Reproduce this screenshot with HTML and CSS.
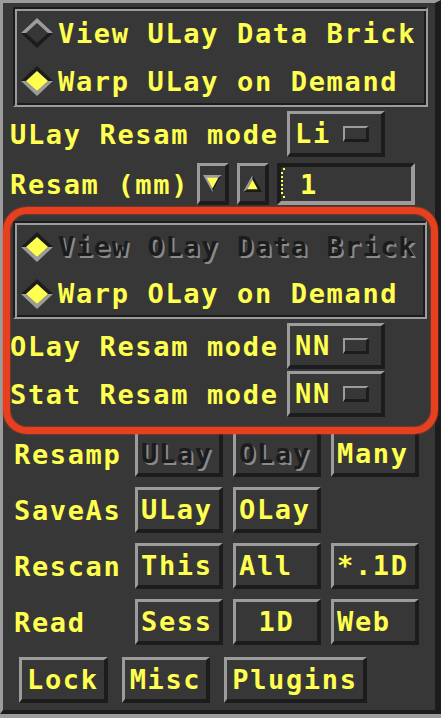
FILE: index.html
```html
<!DOCTYPE html>
<html lang="en">
<head>
  <meta charset="UTF-8">
  <title>Datamode panel</title>
  <link rel="stylesheet" href="styles.css">
</head>
<body>
  <div class="panel">
    <div class="radiobox">
      <div class="radio">
        <svg class="diamond" width="32" height="30" viewBox="0 0 32 30">
          <polygon points="0,15 16,0 32,15 27,15 16,5 5,15" fill="#9c9c9c"/>
          <polygon points="0,15 16,30 32,15 27,15 16,25 5,15" fill="#1c1c1c"/>
        </svg>
        <span>View ULay Data Brick</span>
      </div>
      <div class="radio">
        <svg class="diamond" width="32" height="30" viewBox="0 0 32 30">
          <polygon points="0,15 16,0 32,15 27,15 16,5 5,15" fill="#1c1c1c"/>
          <polygon points="0,15 16,30 32,15 27,15 16,25 5,15" fill="#9c9c9c"/>
          <polygon points="5,15 16,5 27,15 16,25" fill="#ffff50"/>
        </svg>
        <span>Warp ULay on Demand</span>
      </div>
    </div>

    <div class="row opt">
      <span class="label wide">ULay Resam mode</span>
      <div class="optbtn bevel"><span class="optval">Li</span><span class="indicator"></span></div>
    </div>

    <div class="row resam">
      <span class="label short">Resam (mm)</span>
      <div class="arrow bevel">
        <svg width="19" height="19" viewBox="0 0 20 20">
          <polygon points="0,1 20,1 10,19" fill="#9c9c9c"/>
          <polygon points="20,1 10,19 10,15 16,4" fill="#1c1c1c"/>
          <polygon points="4,4 16,4 10,15" fill="#ffff50"/>
        </svg>
      </div>
      <div class="arrow bevel up">
        <svg width="19" height="19" viewBox="0 0 20 20">
          <polygon points="10,1 20,19 0,19" fill="#1c1c1c"/>
          <polygon points="10,1 0,19 4.5,16 10,6" fill="#9c9c9c"/>
          <polygon points="10,6 15.5,16 4.5,16" fill="#ffff50"/>
        </svg>
      </div>
      <div class="field sunken">
        <svg class="cursor" width="6" height="32" viewBox="0 0 6 32">
          <rect x="2" y="0" width="2" height="2" fill="#ffff50"/>
          <rect x="0" y="4" width="2" height="2" fill="#ffff50"/>
          <rect x="0" y="8" width="2" height="2" fill="#ffff50"/>
          <rect x="0" y="12" width="2" height="2" fill="#ffff50"/>
          <rect x="0" y="16" width="2" height="2" fill="#ffff50"/>
          <rect x="0" y="20" width="2" height="2" fill="#ffff50"/>
          <rect x="0" y="24" width="2" height="2" fill="#ffff50"/>
          <rect x="2" y="28" width="2" height="2" fill="#ffff50"/>
        </svg>
        <span class="fieldval">1</span>
      </div>
    </div>

    <div class="radiobox second">
      <div class="radio">
        <svg class="diamond" width="32" height="30" viewBox="0 0 32 30">
          <polygon points="0,15 16,0 32,15 27,15 16,5 5,15" fill="#1c1c1c"/>
          <polygon points="0,15 16,30 32,15 27,15 16,25 5,15" fill="#9c9c9c"/>
          <polygon points="5,15 16,5 27,15 16,25" fill="#ffff50"/>
        </svg>
        <span class="dis">View OLay Data Brick</span>
      </div>
      <div class="radio">
        <svg class="diamond" width="32" height="30" viewBox="0 0 32 30">
          <polygon points="0,15 16,0 32,15 27,15 16,5 5,15" fill="#1c1c1c"/>
          <polygon points="0,15 16,30 32,15 27,15 16,25 5,15" fill="#9c9c9c"/>
          <polygon points="5,15 16,5 27,15 16,25" fill="#ffff50"/>
        </svg>
        <span>Warp OLay on Demand</span>
      </div>
    </div>

    <div class="row opt">
      <span class="label wide">OLay Resam mode</span>
      <div class="optbtn bevel"><span class="optval">NN</span><span class="indicator"></span></div>
    </div>
    <div class="row opt tight">
      <span class="label wide">Stat Resam mode</span>
      <div class="optbtn bevel"><span class="optval">NN</span><span class="indicator"></span></div>
    </div>

    <div class="row btnrow first">
      <span class="label side">Resamp</span>
      <div class="btn bevel"><span class="dis">ULay</span></div>
      <div class="btn bevel"><span class="dis">OLay</span></div>
      <div class="btn bevel">Many</div>
    </div>
    <div class="row btnrow">
      <span class="label side">SaveAs</span>
      <div class="btn bevel">ULay</div>
      <div class="btn bevel">OLay</div>
    </div>
    <div class="row btnrow">
      <span class="label side">Rescan</span>
      <div class="btn bevel">This</div>
      <div class="btn bevel">All</div>
      <div class="btn bevel">*.1D</div>
    </div>
    <div class="row btnrow">
      <span class="label side">Read</span>
      <div class="btn bevel">Sess</div>
      <div class="btn bevel center">1D</div>
      <div class="btn bevel">Web</div>
    </div>

    <div class="row bottom">
      <div class="btn bevel auto">Lock</div>
      <div class="btn bevel auto">Misc</div>
      <div class="btn bevel auto">Plugins</div>
    </div>

    <div class="markup"></div>
  </div>
</body>
</html>
```

FILE: styles.css
```css
body {
  margin: 0;
  background: #9c9c9c;
  font-family: 'DejaVu Sans Mono', 'Liberation Mono', monospace;
  font-weight: bold;
  font-size: 27px;
  letter-spacing: 1.65px;
  color: #ffff50;
}
.panel {
  position: relative;
  width: 441px;
  height: 714px;
  box-sizing: border-box;
  background: #373737;
  border-style: solid;
  border-width: 3px 6px 4px 3px;
  border-color: #9c9c9c #1c1c1c #1c1c1c #9c9c9c;
  display: flex;
  flex-direction: column;
}
.bevel {
  box-sizing: border-box;
  border-style: solid;
  border-width: 3px 4px 4px 3px;
  border-color: #9c9c9c #1c1c1c #1c1c1c #9c9c9c;
}
.sunken {
  box-sizing: border-box;
  border-style: solid;
  border-width: 4px;
  border-color: #1c1c1c #9c9c9c #9c9c9c #1c1c1c;
}
.radiobox {
  margin: 4px 0 0 10px;
  width: 415px;
  height: 100px;
  box-sizing: border-box;
  border: 2px solid;
  border-color: #1c1c1c #9c9c9c #9c9c9c #1c1c1c;
  box-shadow: inset 2px 2px 0 #9c9c9c, inset -2px -2px 0 #1c1c1c;
  display: flex;
  flex-direction: column;
}
.radiobox.second {
  margin-top: 16px;
  width: 414px;
  height: 98px;
}
.radio {
  flex: 1;
  display: flex;
  align-items: center;
  padding-left: 6px;
  gap: 5px;
  line-height: 27px;
}
.diamond {
  flex: none;
}
.dis {
  color: #1c1c1c;
  text-shadow: 2px 2px 0 #8a8a8a;
}
.row {
  display: flex;
  align-items: center;
  line-height: 27px;
}
.label {
  box-sizing: border-box;
  padding-left: 7px;
  white-space: nowrap;
}
.label.wide {
  width: 284px;
}
.label.short {
  width: 194px;
}
.label.side {
  width: 132px;
  padding-left: 11px;
}
.opt {
  height: 46px;
  margin-top: 4px;
}
.opt.tight {
  margin-top: 2px;
}
.optbtn {
  width: 98px;
  height: 46px;
  display: flex;
  align-items: center;
  padding-left: 5px;
}
.optval {
  width: 48px;
}
.indicator {
  width: 26px;
  height: 16px;
  box-sizing: border-box;
  border-style: solid;
  border-width: 2px 3px 3px 2px;
  border-color: #9c9c9c #1c1c1c #1c1c1c #9c9c9c;
}
.resam {
  height: 42px;
  margin-top: 6px;
}
.arrow {
  width: 32px;
  height: 42px;
  display: flex;
  align-items: center;
  justify-content: center;
}
.arrow.up {
  margin-left: 8px;
}
.field {
  margin-left: 8px;
  width: 138px;
  height: 42px;
  display: flex;
  align-items: center;
}
.cursor {
  flex: none;
}
.fieldval {
  margin-left: 13px;
}
.btnrow {
  height: 46px;
  margin-top: 10px;
}
.btnrow.first {
  margin-top: 14px;
}
.btn {
  width: 88px;
  height: 46px;
  display: flex;
  align-items: center;
  padding-left: 3px;
  white-space: nowrap;
}
.btn + .btn {
  margin-left: 10px;
}
.btn.center {
  justify-content: center;
  padding-left: 0;
}
.bottom {
  height: 46px;
  margin-top: 12px;
  padding-left: 16px;
}
.btn.auto {
  width: auto;
  padding: 0 5px;
  justify-content: center;
}
.bottom .btn + .btn {
  margin-left: 14px;
}
.markup {
  position: absolute;
  left: 0;
  top: 204px;
  width: 435px;
  height: 227px;
  box-sizing: border-box;
  border: 7px solid #e6401e;
  border-radius: 24px;
  box-shadow: 0 0 2px #e6401e, inset 0 0 2px #e6401e;
  pointer-events: none;
}
```
